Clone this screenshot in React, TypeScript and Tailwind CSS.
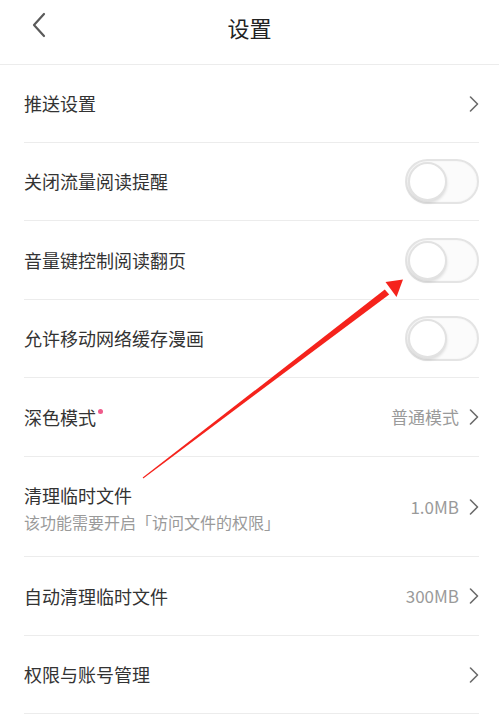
import React from "react";

const Chevron = () => (
  <svg width="10" height="16" viewBox="0 0 10 16" className="shrink-0">
    <path d="M1.5 1 L8.5 8 L1.5 15" fill="none" stroke="#6b6b6b" strokeWidth="1.6" strokeLinecap="round" strokeLinejoin="round" />
  </svg>
);

const Toggle = () => (
  <div className="relative w-[74px] h-[45px] rounded-full border-2 border-[#e4e4e4] bg-[#fbfbfb] shadow-[inset_0_0_2px_rgba(0,0,0,0.05)]">
    <div className="absolute left-[1px] top-[1px] w-[39px] h-[39px] rounded-full bg-white border-2 border-[#e2e2e2] shadow-[0_2px_3px_rgba(0,0,0,0.12)]" />
  </div>
);

const Row = ({ children, h }: { children: React.ReactNode; h: string }) => (
  <div className={`ml-6 mr-5 flex items-center justify-between border-b border-[#ececec] ${h}`}>{children}</div>
);

export default function App() {
  return (
    <div className="relative w-[499px] h-[714px] bg-white overflow-hidden text-[#333]" style={{ fontFamily: '"Noto Sans CJK SC", "Noto Sans", sans-serif' }}>
      <div className="h-[65px] flex items-center justify-center relative border-b border-[#ececec]">
        <svg width="16" height="26" viewBox="0 0 16 26" className="absolute left-[31px] top-[12px]">
          <path d="M13 2 L3 13 L13 24" fill="none" stroke="#5a5a5a" strokeWidth="2.2" strokeLinecap="round" strokeLinejoin="round" />
        </svg>
        <span className="text-[22px] text-[#222] -mt-[10px]">设置</span>
      </div>
      <Row h="h-[78px]">
        <span className="text-[18px]">推送设置</span>
        <Chevron />
      </Row>
      <Row h="h-[78px]">
        <span className="text-[18px]">关闭流量阅读提醒</span>
        <Toggle />
      </Row>
      <Row h="h-[79px]">
        <span className="text-[18px]">音量键控制阅读翻页</span>
        <Toggle />
      </Row>
      <Row h="h-[78px]">
        <span className="text-[18px]">允许移动网络缓存漫画</span>
        <Toggle />
      </Row>
      <Row h="h-[79px]">
        <span className="text-[18px] relative">
          深色模式
          <span className="absolute -right-[7px] top-[5px] w-[5px] h-[5px] rounded-full bg-[#ef5a8a]" />
        </span>
        <div className="flex items-center gap-[10px]">
          <span className="text-[17px] text-[#9a9a9a]">普通模式</span>
          <Chevron />
        </div>
      </Row>
      <Row h="h-[100px]">
        <div className="flex flex-col pt-[2px]">
          <span className="text-[18px] leading-[28px]">清理临时文件</span>
          <span className="text-[16px] leading-[26px] text-[#9a9a9a]">该功能需要开启「访问文件的权限」</span>
        </div>
        <div className="flex items-center gap-[10px]">
          <span className="text-[17px] text-[#9a9a9a]">1.0MB</span>
          <Chevron />
        </div>
      </Row>
      <Row h="h-[79px]">
        <span className="text-[18px]">自动清理临时文件</span>
        <div className="flex items-center gap-[10px]">
          <span className="text-[17px] text-[#9a9a9a]">300MB</span>
          <Chevron />
        </div>
      </Row>
      <Row h="h-[78px]">
        <span className="text-[18px]">权限与账号管理</span>
        <Chevron />
      </Row>
      <svg className="absolute left-0 top-0 pointer-events-none" width="499" height="714" viewBox="0 0 499 714">
        <polygon points="142.7,477.6 143.3,478.4 389.2,294.5 384.8,289.5" fill="#f5231c" />
        <polygon points="403,279.5 385.5,282 396.5,297" fill="#f5231c" />
      </svg>
    </div>
  );
}
